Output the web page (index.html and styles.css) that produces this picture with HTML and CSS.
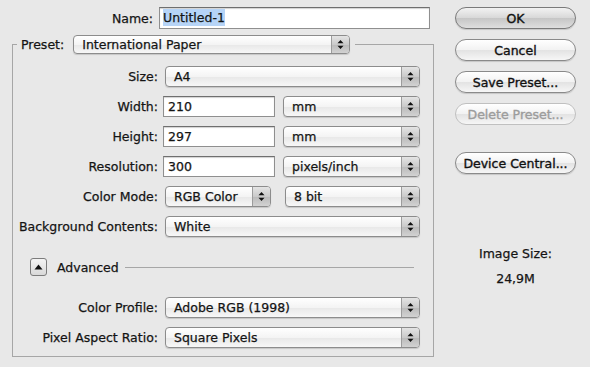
FILE: index.html
```html
<!DOCTYPE html>
<html lang="en">
<head>
    <meta charset="UTF-8">
    <meta name="viewport" content="width=device-width, initial-scale=1.0">
    <title>New Document</title>
    <link rel="stylesheet" href="styles.css">
</head>
<body>
    <div class="dialog">
        <div class="main">
            <div class="name-row">
                <span class="lbl name-lbl">Name:</span>
                <div class="field name-field"><span class="sel">Untitled-1</span></div>
            </div>
            <fieldset class="group">
                <legend>
                    <div class="legend-inner">
                        <span class="legend-lbl">Preset:</span>
                        <div class="popup preset-pop">International Paper<span class="arrows"><svg width="7" height="11" viewBox="0 0 7 11"><path d="M3.5 1 L6.5 4.2 L0.5 4.2 Z M3.5 10 L6.5 6.8 L0.5 6.8 Z" fill="#111"/></svg></span></div>
                    </div>
                </legend>

                <div class="row">
                    <span class="lbl">Size:</span>
                    <div class="popup wide">A4<span class="arrows"><svg width="7" height="11" viewBox="0 0 7 11"><path d="M3.5 1 L6.5 4.2 L0.5 4.2 Z M3.5 10 L6.5 6.8 L0.5 6.8 Z" fill="#111"/></svg></span></div>
                </div>
                <div class="row">
                    <span class="lbl">Width:</span>
                    <div class="field num">210</div>
                    <div class="popup unit">mm<span class="arrows"><svg width="7" height="11" viewBox="0 0 7 11"><path d="M3.5 1 L6.5 4.2 L0.5 4.2 Z M3.5 10 L6.5 6.8 L0.5 6.8 Z" fill="#111"/></svg></span></div>
                </div>
                <div class="row">
                    <span class="lbl">Height:</span>
                    <div class="field num">297</div>
                    <div class="popup unit">mm<span class="arrows"><svg width="7" height="11" viewBox="0 0 7 11"><path d="M3.5 1 L6.5 4.2 L0.5 4.2 Z M3.5 10 L6.5 6.8 L0.5 6.8 Z" fill="#111"/></svg></span></div>
                </div>
                <div class="row">
                    <span class="lbl">Resolution:</span>
                    <div class="field num">300</div>
                    <div class="popup unit">pixels/inch<span class="arrows"><svg width="7" height="11" viewBox="0 0 7 11"><path d="M3.5 1 L6.5 4.2 L0.5 4.2 Z M3.5 10 L6.5 6.8 L0.5 6.8 Z" fill="#111"/></svg></span></div>
                </div>
                <div class="row">
                    <span class="lbl">Color Mode:</span>
                    <div class="popup mode">RGB Color<span class="arrows"><svg width="7" height="11" viewBox="0 0 7 11"><path d="M3.5 1 L6.5 4.2 L0.5 4.2 Z M3.5 10 L6.5 6.8 L0.5 6.8 Z" fill="#111"/></svg></span></div>
                    <div class="popup bits">8 bit<span class="arrows"><svg width="7" height="11" viewBox="0 0 7 11"><path d="M3.5 1 L6.5 4.2 L0.5 4.2 Z M3.5 10 L6.5 6.8 L0.5 6.8 Z" fill="#111"/></svg></span></div>
                </div>
                <div class="row">
                    <span class="lbl">Background Contents:</span>
                    <div class="popup wide">White<span class="arrows"><svg width="7" height="11" viewBox="0 0 7 11"><path d="M3.5 1 L6.5 4.2 L0.5 4.2 Z M3.5 10 L6.5 6.8 L0.5 6.8 Z" fill="#111"/></svg></span></div>
                </div>

                <div class="advanced">
                    <span class="disclosure"><svg width="9" height="6" viewBox="0 0 9 6"><path d="M4.5 0.5 L8.5 5.5 L0.5 5.5 Z" fill="#111"/></svg></span>
                    <span class="adv-lbl">Advanced</span>
                    <span class="adv-line"></span>
                </div>

                <div class="row">
                    <span class="lbl">Color Profile:</span>
                    <div class="popup wide">Adobe RGB (1998)<span class="arrows"><svg width="7" height="11" viewBox="0 0 7 11"><path d="M3.5 1 L6.5 4.2 L0.5 4.2 Z M3.5 10 L6.5 6.8 L0.5 6.8 Z" fill="#111"/></svg></span></div>
                </div>
                <div class="row last">
                    <span class="lbl">Pixel Aspect Ratio:</span>
                    <div class="popup wide">Square Pixels<span class="arrows"><svg width="7" height="11" viewBox="0 0 7 11"><path d="M3.5 1 L6.5 4.2 L0.5 4.2 Z M3.5 10 L6.5 6.8 L0.5 6.8 Z" fill="#111"/></svg></span></div>
                </div>
            </fieldset>
        </div>

        <div class="side">
            <button class="btn default">OK</button>
            <button class="btn">Cancel</button>
            <button class="btn">Save Preset...</button>
            <button class="btn disabled">Delete Preset...</button>
            <button class="btn device">Device Central...</button>
            <div class="size-title">Image Size:</div>
            <div class="size-value">24,9M</div>
        </div>
    </div>
</body>
</html>
```

FILE: styles.css
```css
body {
    margin: 0;
    background-color: #e8e8e8;
    font-family: "DejaVu Sans", "Liberation Sans", sans-serif;
    font-size: 12.5px;
    color: #141414;
    -webkit-text-stroke: 0.25px currentColor;
}

.dialog {
    display: flex;
    width: 590px;
    height: 367px;
}

.main {
    width: 422px;
    padding: 7px 0 0 12px;
}

/* name row */
.name-row {
    display: flex;
    align-items: center;
    height: 22px;
}

.name-lbl {
    width: 145px;
    text-align: right;
}

.field {
    box-sizing: border-box;
    height: 22px;
    background: #fff;
    border: 1px solid #8f8f8f;
    border-top-color: #6f6f6f;
    box-shadow: inset 0 1px 1px rgba(0, 0, 0, 0.18);
    padding: 0 4px;
    line-height: 20px;
}

.name-field {
    width: 271px;
    margin-left: 6px;
    padding-left: 3px;
}

.sel {
    background-color: #b6d4f7;
    padding: 1px 0;
}

/* preset group */
.group {
    margin: 6px 0 0 0;
    padding: 12px 0 8px 4px;
    width: 422px;
    box-sizing: border-box;
    border: 1px solid #a6a6a6;
}

.group legend {
    padding: 0 0;
}

.legend-inner {
    display: flex;
    align-items: center;
}

.legend-lbl {
    padding-left: 4px;
    margin-right: 9px;
}

.popup {
    position: relative;
    box-sizing: border-box;
    height: 21px;
    line-height: 19px;
    padding-left: 8px;
    border: 1px solid #8c8c8c;
    border-radius: 4px;
    background: linear-gradient(#ffffff, #f4f4f4 50%, #e8e8e8 52%, #f7f7f7);
    box-shadow: 0 1px 1px rgba(0, 0, 0, 0.15);
    white-space: nowrap;
}

.arrows {
    position: absolute;
    top: 0;
    right: 0;
    bottom: 0;
    width: 17px;
    display: flex;
    align-items: center;
    justify-content: center;
    border-left: 1px solid #9c9c9c;
    border-radius: 0 3px 3px 0;
    background: linear-gradient(#e4e4e4, #cacaca 50%, #bababa 52%, #d2d2d2);
}

.preset-pop {
    width: 277px;
    height: 19px;
    line-height: 17px;
    margin-right: 5px;
}

.row {
    display: flex;
    align-items: center;
    height: 21px;
    margin-bottom: 9px;
}

.row.last {
    margin-bottom: 0;
}

.lbl {
    width: 141px;
    text-align: right;
    white-space: nowrap;
}

.row .lbl {
    flex: none;
}

.wide {
    width: 255px;
    margin-left: 7px;
}

.num {
    width: 112px;
    height: 21px;
    line-height: 19px;
    margin-left: 5px;
}

.unit {
    width: 137px;
    margin-left: 8px;
}

.mode {
    width: 106px;
    margin-left: 7px;
}

.bits {
    width: 135px;
    margin-left: 14px;
}

/* advanced */
.advanced {
    display: flex;
    align-items: center;
    height: 20px;
    margin: 20px 19px 20px 13px;
}

.disclosure {
    box-sizing: border-box;
    width: 17px;
    height: 18px;
    display: flex;
    align-items: center;
    justify-content: center;
    border: 1px solid #7c7c7c;
    border-radius: 3px;
    background: linear-gradient(#f4f4f4, #d9d9d9);
}

.adv-lbl {
    margin-left: 10px;
}

.adv-line {
    flex: 1;
    height: 1px;
    margin-left: 6px;
    background-color: #a6a6a6;
}

/* buttons column */
.side {
    display: flex;
    flex-direction: column;
    align-items: center;
    width: 121px;
    margin-left: 21px;
    padding-top: 7px;
}

.btn {
    box-sizing: border-box;
    width: 121px;
    height: 22px;
    margin-bottom: 10px;
    padding: 0;
    border: 1px solid #8a8a8a;
    border-radius: 11px;
    font-family: inherit;
    font-size: 12.5px;
    color: #111;
    -webkit-text-stroke: 0.35px currentColor;
    background: linear-gradient(#ffffff, #f2f2f2 50%, #e3e3e3 52%, #f6f6f6);
    box-shadow: 0 1px 1px rgba(0, 0, 0, 0.15);
}

.btn.default {
    background: linear-gradient(#f2f2f2, #d8d8d8 50%, #c6c6c6 52%, #dedede);
    border-color: #7a7a7a;
}

.btn.disabled {
    color: #9c9c9c;
    border-color: #c0c0c0;
    box-shadow: none;
}

.btn.device {
    margin-top: 17px;
}

.size-title {
    margin-top: 62px;
    line-height: 16px;
}

.size-value {
    margin-top: 9px;
    line-height: 16px;
}
```
